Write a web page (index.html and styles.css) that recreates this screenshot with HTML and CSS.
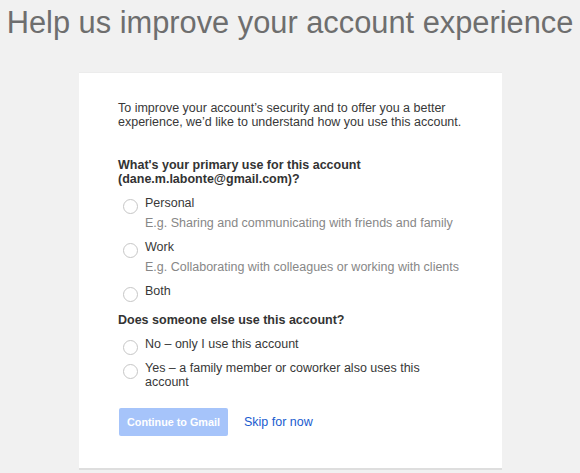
FILE: index.html
```html
<!DOCTYPE html>
<html>
<head>
<meta charset="utf-8">
<link rel="stylesheet" href="styles.css">
</head>
<body>
<h1 class="title">Help us improve your account experience</h1>
<div class="card">
  <p class="intro">To improve your account’s security and to offer you a better experience, we’d like to understand how you use this account.</p>
  <h2 class="question">What's your primary use for this account (dane.m.labonte@gmail.com)?</h2>
  <div class="options">
    <label class="option">
      <span class="radio"></span>
      <span class="opt-text"><span class="opt-label">Personal</span><span class="opt-hint">E.g. Sharing and communicating with friends and family</span></span>
    </label>
    <label class="option">
      <span class="radio"></span>
      <span class="opt-text"><span class="opt-label">Work</span><span class="opt-hint">E.g. Collaborating with colleagues or working with clients</span></span>
    </label>
    <label class="option">
      <span class="radio"></span>
      <span class="opt-text"><span class="opt-label">Both</span></span>
    </label>
  </div>
  <h2 class="question q2">Does someone else use this account?</h2>
  <div class="options">
    <label class="option">
      <span class="radio"></span>
      <span class="opt-text"><span class="opt-label">No – only I use this account</span></span>
    </label>
    <label class="option">
      <span class="radio"></span>
      <span class="opt-text"><span class="opt-label">Yes – a family member or coworker also uses this account</span></span>
    </label>
  </div>
  <div class="actions">
    <button class="btn-primary" disabled>Continue to Gmail</button>
    <a class="skip" href="#">Skip for now</a>
  </div>
</div>
</body>
</html>
```
FILE: styles.css
```css
html, body {
  margin: 0;
  padding: 0;
  background: #f1f1f1;
  font-family: "Liberation Sans", Arial, sans-serif;
}
.title {
  margin: 0;
  padding-top: 3px;
  text-align: center;
  font-size: 30.8px;
  font-weight: normal;
  color: #6e6e6e;
  line-height: 40px;
}
.card {
  box-sizing: border-box;
  width: 423px;
  margin: 29px 0 0 79px;
  background: #ffffff;
  border-top: 1px solid #ececec;
  border-bottom: 2px solid #dedede;
  padding: 28px 40px 32px 39px;
  color: #383838;
  font-size: 12.5px;
  line-height: 14px;
}
.intro {
  margin: 0 0 29px 0;
}
.question {
  margin: 0 0 10px 0;
  font-size: 12.5px;
  font-weight: bold;
  line-height: 14px;
  color: #333333;
}
.q2 {
  margin-top: 15px;
}
.options {
  display: flex;
  flex-direction: column;
  gap: 10px;
}
.option {
  display: flex;
  align-items: flex-start;
  gap: 7px;
  padding-left: 5px;
}
.radio {
  flex: none;
  box-sizing: border-box;
  width: 15px;
  height: 15px;
  border: 1px solid #c6c6c6;
  border-radius: 50%;
  margin: 3px 0 -4px 0;
}
.opt-text {
  display: flex;
  flex-direction: column;
  gap: 6px;
}
.opt-label {
  color: #383838;
}
.opt-hint {
  color: #878787;
}
.actions {
  display: flex;
  align-items: center;
  gap: 16px;
  margin-top: 19px;
}
.btn-primary {
  width: 109px;
  height: 28px;
  margin-left: 1px;
  border: none;
  border-radius: 2px;
  background: #a6c4fa;
  color: #ffffff;
  font-family: "Liberation Sans", Arial, sans-serif;
  font-size: 10.8px;
  font-weight: bold;
  padding: 0;
}
.skip {
  color: #1a5ccf;
  text-decoration: none;
  font-size: 12.5px;
}
```
